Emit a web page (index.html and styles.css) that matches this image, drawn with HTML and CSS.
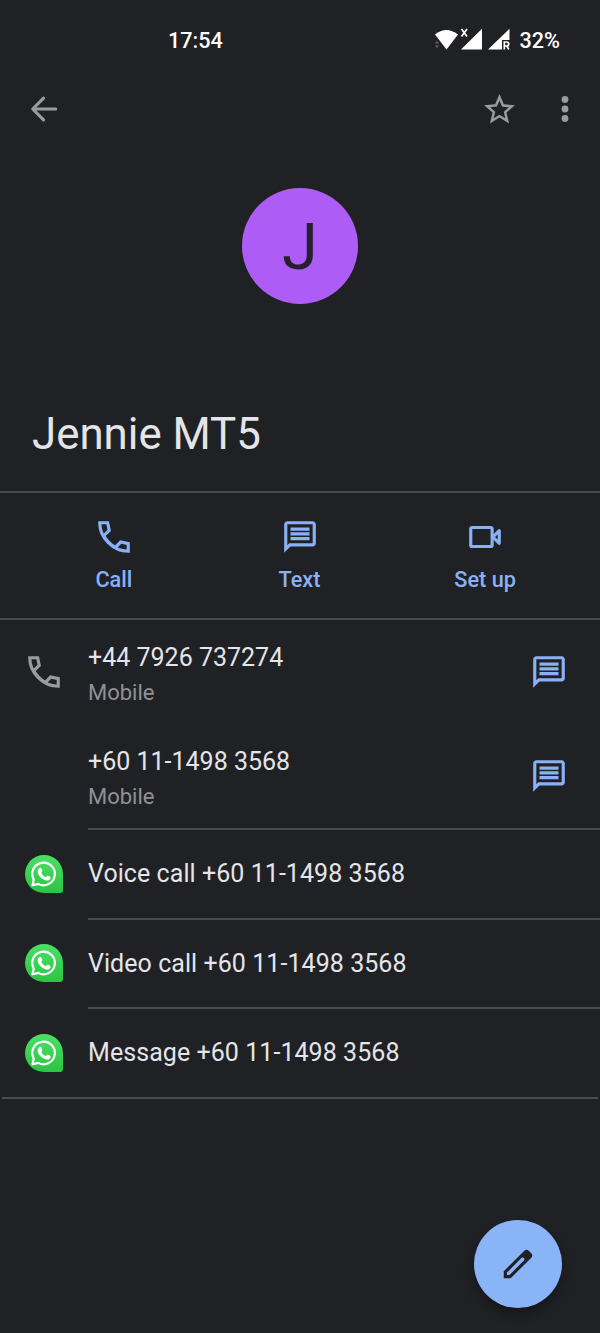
FILE: index.html
```
<!DOCTYPE html>
<html lang="en">
<head>
  <meta charset="UTF-8">
  <meta name="viewport" content="width=device-width, initial-scale=1.0">
  <title>Jennie MT5 - Contacts</title>
  <link rel="stylesheet" href="styles.css">
</head>
<body>
  <!-- Shared icons -->
  <svg class="sprite" aria-hidden="true">
    <symbol id="icon-phone" viewBox="0 0 24 24">
      <path d="M3 3h5l1 4.800-3.500 3.400C7.200 14.300 9.700 16.800 12.900 18.600l3.300-3.400 4.800 1V21C11.400 21 3 12.600 3 3z" fill="none" stroke="currentColor" stroke-width="2"/>
    </symbol>
    <symbol id="icon-message" viewBox="0 0 24 24">
      <path fill="currentColor" d="M4 4h16v12H5.170L4 17.170V4m0-2c-1.100 0-1.990.9-1.990 2L2 22l4-4h14c1.100 0 2-.9 2-2V4c0-1.100-.9-2-2-2H4zm2 10h12v2H6v-2zm0-3h12v2H6V9zm0-3h12v2H6V6z"/>
    </symbol>
    <linearGradient id="green" x1="0" y1="0" x2="0" y2="1">
      <stop offset="0" stop-color="#4ae066"/>
      <stop offset="1" stop-color="#2bc443"/>
    </linearGradient>
    <symbol id="icon-whatsapp" viewBox="0 0 38 38">
      <path fill="url(#green)" d="M19 0a19 19 0 0 1 19 19v16a3 3 0 0 1-3 3H19a19 19 0 0 1 0-38z"/>
      <path fill="none" stroke="#fff" stroke-width="2.200" stroke-linejoin="round" d="M7.500 30.300l1.300-5.700a11.300 11.300 0 1 1 4.500 4.300z"/>
      <path fill="#fff" d="M14.200 13.200c.6-.7 1.700-.7 2.100.1l1.100 2.500c.3.800-.9 1.600-1.100 2.100.9 1.900 2.500 3.300 4.500 4.200.7-.3 1.300-1.700 2-1.500l2.400 1.200c1 .7.300 2.600-.8 3.200-1.400.8-3 .7-4.500 0-3-1.200-5.200-3.300-6.700-6.100-.9-2-.6-4.300 1-5.700z"/>
    </symbol>
  </svg>

  <div class="screen">
    <div class="status-bar">
      <span class="time">17:54</span>
      <svg class="status-icons" width="76" height="26" viewBox="0 0 76 26" fill="#fff">
        <path d="M1 7.500Q12 -1.500 24 7.500L12.500 22.500z"/>
        <path fill="#66686b" d="M1 16.500l2-2.500 2 2.500zM1 18.500h4L3 21z"/>
        <path d="M48 1.800V22.500H27z"/>
        <path fill="none" stroke="#fff" stroke-width="1.700" d="M27.500 2l5.500 7.500M33 2l-5.500 7.500"/>
        <path d="M75.500 1.800V13H68v9.500H54z"/>
        <path fill="none" stroke="#fff" stroke-width="1.700" d="M70.300 22.500V15h2.400a2 2 0 0 1 0 4h-2.400M72.700 19l2.200 3.500"/>
      </svg>
      <span class="battery">32%</span>
    </div>

    <div class="toolbar">
      <svg class="back" width="38" height="38" viewBox="0 0 24 24">
        <path d="M19.400 12H5.200M11.700 5.100L4.900 12l6.800 6.900" fill="none" stroke="currentColor" stroke-width="2" stroke-linecap="round" stroke-linejoin="round"/>
      </svg>
      <svg class="star" width="37" height="37" viewBox="0 0 24 24">
        <path fill="currentColor" d="M22 9.240l-7.190-.62L12 2 9.190 8.630 2 9.240l5.460 4.730L5.820 21 12 17.270 18.180 21l-1.630-7.030L22 9.240zM12 15.400l-3.760 2.270 1-4.280-3.320-2.880 4.380-.38L12 6.100l1.710 4.040 4.380.38-3.320 2.880 1 4.280L12 15.400z"/>
      </svg>
      <svg class="more" width="38" height="38" viewBox="0 0 24 24" fill="currentColor">
        <circle cx="12" cy="6" r="2.150"/>
        <circle cx="12" cy="12" r="2.150"/>
        <circle cx="12" cy="18" r="2.150"/>
      </svg>
    </div>

    <div class="avatar">J</div>
    <h1>Jennie MT5</h1>

    <div class="actions">
      <a class="action">
        <svg class="icon"><use href="#icon-phone"/></svg>
        <span>Call</span>
      </a>
      <a class="action">
        <svg class="icon"><use href="#icon-message"/></svg>
        <span>Text</span>
      </a>
      <a class="action">
        <svg class="icon" viewBox="0 0 24 24">
          <path d="M4 6h11.500a1 1 0 0 1 1 1v10a1 1 0 0 1-1 1H4a1 1 0 0 1-1-1V7a1 1 0 0 1 1-1zM17 12l4-4v8z" fill="none" stroke="currentColor" stroke-width="2" stroke-linejoin="round"/>
        </svg>
        <span>Set up</span>
      </a>
    </div>

    <!-- Phone numbers -->
    <div class="phone-row">
      <svg class="icon lead"><use href="#icon-phone"/></svg>
      <div class="phone">
        <div class="number">+44 7926 737274</div>
        <div class="type">Mobile</div>
      </div>
      <svg class="icon text-icon"><use href="#icon-message"/></svg>
    </div>
    <div class="phone-row">
      <div class="phone second">
        <div class="number">+60 11-1498 3568</div>
        <div class="type">Mobile</div>
      </div>
      <svg class="icon text-icon"><use href="#icon-message"/></svg>
    </div>

    <!-- WhatsApp -->
    <div class="app-row">
      <svg class="whatsapp"><use href="#icon-whatsapp"/></svg>
      <span>Voice call +60 11-1498 3568</span>
    </div>
    <div class="app-row">
      <svg class="whatsapp"><use href="#icon-whatsapp"/></svg>
      <span>Video call +60 11-1498 3568</span>
    </div>
    <div class="app-row">
      <svg class="whatsapp"><use href="#icon-whatsapp"/></svg>
      <span>Message +60 11-1498 3568</span>
    </div>
    <div class="card-end"></div>

    <button class="fab" aria-label="Edit contact">
      <svg width="38" height="38" viewBox="0 0 24 24">
        <path fill="currentColor" d="M20.400 5.200l-1.600-1.600c-.8-.8-2-.8-2.800 0L3 16.600V21h4.400L20.400 8c.8-.8.8-2 0-2.800zM6.600 19H5v-1.600L14.300 8.100c1.200-.6 2.200.5 1.600 1.600z"/>
      </svg>
    </button>
  </div>
</body>
</html>
```
FILE: styles.css
```
* {
  box-sizing: border-box;
}
body {
  margin: 0;
  background-color: #202125;
  color: #e4e5e9;
  font-family: Roboto, sans-serif;
}
.sprite {
  position: absolute;
  width: 0;
  height: 0;
}
.screen {
  position: relative;
  width: 600px;
  height: 1333px;
  overflow: hidden;
}
.status-bar {
  display: flex;
  align-items: center;
  height: 80px;
  padding: 0 40px 0 168px;
  color: #fff;
  font-size: 21.6px;
  font-weight: 500;
}
.status-icons {
  margin-left: auto;
  margin-right: 10px;
}
.toolbar {
  display: flex;
  align-items: center;
  height: 58px;
  padding: 0 16px 0 25px;
  color: #9a9b9f;
}
.star {
  margin-left: auto;
  margin-right: 28px;
}
.avatar {
  width: 116px;
  height: 116px;
  margin: 50px auto 0;
  border-radius: 50%;
  background-color: #ae5cf6;
  color: #251f30;
  font-size: 65px;
  line-height: 118px;
  text-align: center;
}
h1 {
  height: 187px;
  margin: 0;
  padding: 104px 32px 0;
  font-size: 43.8px;
  font-weight: 400;
  line-height: 52px;
}
.actions {
  display: flex;
  height: 129px;
  padding: 0 22px 0 21px;
  border-top: 2px solid #4a4b4f;
  border-bottom: 2px solid #4a4b4f;
}
.action {
  flex: 1;
  display: flex;
  flex-direction: column;
  align-items: center;
  padding-top: 25px;
  color: #8ab1f5;
  font-size: 21.7px;
  font-weight: 500;
  line-height: 26px;
}
.action span {
  margin-top: 11px;
}
.icon {
  width: 38px;
  height: 38px;
  flex: none;
}
.phone-row {
  display: flex;
  align-items: center;
  height: 104px;
  padding: 0 32px 0 25px;
}
.lead {
  color: #9a9b9f;
}
.phone {
  margin-left: 25px;
  padding-top: 5px;
}
.phone.second {
  margin-left: 63px;
  padding-top: 6px;
}
.number {
  font-size: 25px;
  line-height: 36px;
}
.type {
  color: #909195;
  font-size: 22px;
  line-height: 34px;
}
.text-icon {
  margin-left: auto;
  color: #8ab1f5;
}
.app-row {
  display: flex;
  align-items: center;
  height: 89.5px;
  padding-left: 25px;
  font-size: 25px;
  letter-spacing: 0.06px;
}
.app-row span {
  display: flex;
  align-items: center;
  flex: 1;
  height: 100%;
  margin-left: 25px;
  border-top: 2px solid #4a4b4f;
}
.card-end {
  height: 2px;
  margin: 0 2px;
  background-color: #4a4b4f;
}
.whatsapp {
  width: 38px;
  height: 38px;
  margin-top: 2px;
}
.fab {
  position: absolute;
  right: 38px;
  bottom: 25px;
  display: flex;
  align-items: center;
  justify-content: center;
  width: 88px;
  height: 88px;
  padding: 0;
  border: none;
  border-radius: 50%;
  background-color: #8ab4f8;
  color: #202125;
  box-shadow: 0 6px 12px rgba(0, 0, 0, 0.35);
}
```
